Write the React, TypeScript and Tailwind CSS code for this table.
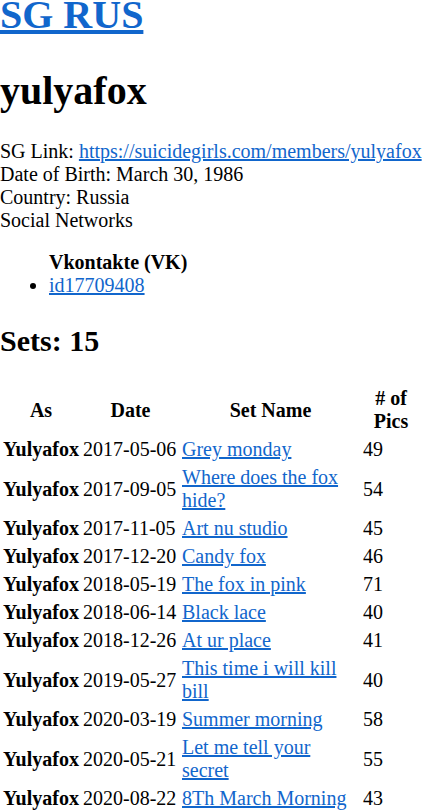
import React from "react";

const rows: [string, string, number][] = [
  ["2017-05-06", "Grey monday", 49],
  ["2017-09-05", "Where does the fox hide?", 54],
  ["2017-11-05", "Art nu studio", 45],
  ["2017-12-20", "Candy fox", 46],
  ["2018-05-19", "The fox in pink", 71],
  ["2018-06-14", "Black lace", 40],
  ["2018-12-26", "At ur place", 41],
  ["2019-05-27", "This time i will kill bill", 40],
  ["2020-03-19", "Summer morning", 58],
  ["2020-05-21", "Let me tell your secret", 55],
  ["2020-08-22", "8Th March Morning", 43],
];

export default function App() {
  return (
    <div className="font-['Liberation_Serif',serif] text-[20px] leading-[normal] text-black bg-white min-h-screen">
      <h1 className="text-[40px] font-bold leading-[normal] mt-[-9px]">
        <a href="#" className="text-[#1166cc] underline">SG RUS</a>
      </h1>
      <h1 className="text-[40px] font-bold leading-[normal] mt-[29px] mb-[26px]">yulyafox</h1>
      <div>
        SG Link:{" "}
        <a href="#" className="text-[#1166cc] underline">https://suicidegirls.com/members/yulyafox</a>
      </div>
      <div>Date of Birth: March 30, 1986</div>
      <div>Country: Russia</div>
      <div>Social Networks</div>
      <ul className="mt-[19px] pl-[49px] list-disc">
        <b className="block font-bold">Vkontakte (VK)</b>
        <li>
          <a href="#" className="text-[#1166cc] underline">id17709408</a>
        </li>
      </ul>
      <h2 className="text-[30px] font-bold leading-[normal] mt-[27px] mb-[26px]">Sets: 15</h2>
      <table className="table-fixed w-[422px] border-separate border-spacing-[2px]">
        <thead>
          <tr>
            <th className="w-[78px] p-px font-bold text-center align-middle">As</th>
            <th className="w-[97px] p-px font-bold text-center align-middle">Date</th>
            <th className="w-[179px] p-px font-bold text-center align-middle">Set Name</th>
            <th className="w-[58px] p-px font-bold text-center align-middle"># of Pics</th>
          </tr>
        </thead>
        <tbody>
          {rows.map(([d, n, c]) => (
            <tr key={d}>
              <td className="px-px pt-[2px] pb-px align-middle font-bold whitespace-nowrap">Yulyafox</td>
              <td className="px-px pt-[2px] pb-px align-middle whitespace-nowrap">{d}</td>
              <td className="px-px pt-[2px] pb-px align-middle">
                <a href="#" className="text-[#1166cc] underline">{n}</a>
              </td>
              <td className="px-px pt-[2px] pb-px align-middle">{c}</td>
            </tr>
          ))}
        </tbody>
      </table>
    </div>
  );
}
